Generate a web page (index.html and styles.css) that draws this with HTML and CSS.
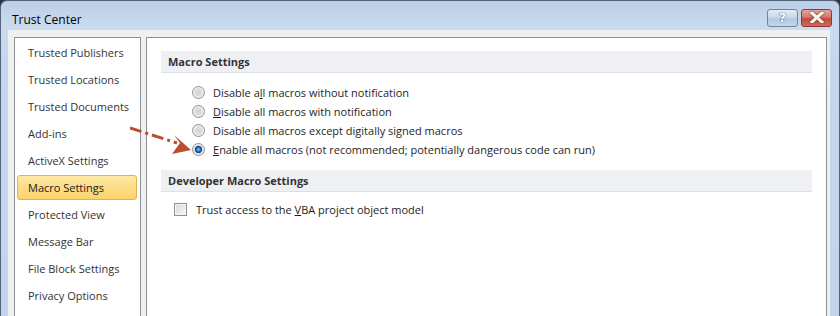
FILE: index.html
```html
<!DOCTYPE html>
<html>
<head>
<meta charset="utf-8">
<link rel="stylesheet" href="styles.css">
</head>
<body>
<div class="window">
  <div class="titlebar">
    <span class="title">Trust Center</span>
    <div class="caption-buttons">
      <span class="cbtn help">?</span>
      <span class="cbtn close"><svg width="14" height="11" viewBox="0 0 14 11"><path d="M2 1 L12 10 M12 1 L2 10" stroke="#fff" stroke-width="3" stroke-linecap="square"/><path d="M2 1 L12 10 M12 1 L2 10" stroke="#f4f4f4" stroke-width="1.6"/></svg></span>
    </div>
  </div>
  <div class="client">
    <ul class="nav">
      <li>Trusted Publishers</li>
      <li>Trusted Locations</li>
      <li>Trusted Documents</li>
      <li>Add-ins</li>
      <li>ActiveX Settings</li>
      <li class="selected">Macro Settings</li>
      <li>Protected View</li>
      <li>Message Bar</li>
      <li>File Block Settings</li>
      <li>Privacy Options</li>
    </ul>
    <div class="content">
      <div class="section-head">Macro Settings</div>
      <div class="options">
        <div class="opt"><span class="radio"></span><span>Disable a<u>l</u>l macros without notification</span></div>
        <div class="opt"><span class="radio"></span><span><u>D</u>isable all macros with notification</span></div>
        <div class="opt"><span class="radio"></span><span>Disable all macros except di<u>g</u>itally signed macros</span></div>
        <div class="opt"><span class="radio checked"></span><span><u>E</u>nable all macros (not recommended; potentially dangerous code can run)</span></div>
      </div>
      <div class="section-head">Developer Macro Settings</div>
      <div class="checks">
        <div class="opt"><span class="checkbox"></span><span>Trust access to the <u>V</u>BA project object model</span></div>
      </div>
    </div>
  </div>
  <svg class="arrow" width="70" height="40" viewBox="0 0 70 40">
    <path d="M0 2 L47 17" stroke="#b8502e" stroke-width="3" stroke-dasharray="12 4 3 4" fill="none"/>
    <path d="M61 24 L44 9 L50 17 L42 28 Z" fill="#b8502e"/>
  </svg>
</div>
</body>
</html>
```

FILE: styles.css
```css
html, body {
  margin: 0;
  padding: 0;
  background: #2a3340;
}
body {
  width: 840px;
  height: 316px;
  overflow: hidden;
  font-family: "Open Sans", "Noto Sans", sans-serif;
  font-size: 11px;
  color: #1e1e1e;
}
.window {
  position: relative;
  box-sizing: border-box;
  width: 840px;
  height: 316px;
  border: 1px solid #54657a;
  border-bottom: none;
  border-radius: 7px 7px 0 0;
  background: linear-gradient(#bccfe7 0, #cbdcf0 28px, #c4d7ee 60px, #c2d5ec 100%);
  padding: 0 9px 0 7px;
  display: flex;
  flex-direction: column;
}
.titlebar {
  height: 29px;
  display: flex;
  align-items: center;
  justify-content: space-between;
}
.title {
  margin-left: 4px;
  margin-top: 7px;
  font-size: 12px;
  color: #000;
}
.caption-buttons {
  display: flex;
  gap: 3px;
  margin-top: 4px;
  margin-right: -2px;
}
.cbtn {
  box-sizing: border-box;
  height: 18px;
  border-radius: 3px;
  display: flex;
  align-items: center;
  justify-content: center;
}
.help {
  width: 31px;
  border: 1px solid #7183a0;
  background: linear-gradient(#e1ebf6 0, #c9d9ec 45%, #b3c7e0 55%, #c5d7ec 100%);
  color: #fff;
  font-weight: bold;
  font-size: 13px;
  font-family: "DejaVu Sans", sans-serif;
  text-shadow: 0 0 1px #3d4f6a, 0 0 1px #3d4f6a;
}
.close {
  width: 31px;
  border: 1px solid #8a3a33;
  background: linear-gradient(#e3a89e 0, #d3776a 45%, #c24a3a 55%, #d26a56 100%);
}
.close svg { filter: drop-shadow(0 0 1px #6a2a22); }
.client {
  flex: 1;
  background: #f0f0f0;
  display: flex;
  gap: 5px;
  padding: 7px 3px 0 6px;
  min-height: 0;
}
.nav {
  list-style: none;
  margin: 0;
  padding: 2px 0 0 0;
  width: 125px;
  border: 1px solid #8c8f94;
  border-bottom: none;
  background: #fff;
  color: #333;
}
.nav li {
  box-sizing: border-box;
  height: 25px;
  margin: 0 3px 2px 2px;
  padding-left: 10px;
  display: flex;
  align-items: center;
  border: 1px solid transparent;
  border-radius: 3px;
}
.nav li.selected {
  border-color: #e5b24a;
  background: linear-gradient(#fde9a6 0, #fcdc84 50%, #fbd36e 100%);
  color: #222;
}
.content {
  flex: 1;
  border: 1px solid #8c8f94;
  border-bottom: none;
  background: #fff;
  padding: 13px 14px 0 14px;
}
.section-head {
  height: 21px;
  line-height: 21px;
  padding-left: 7px;
  background: #eef0f3;
  border-bottom: 1px solid #dde1e6;
  font-weight: bold;
  color: #333;
}
.options {
  padding: 10px 0 11px 31px;
  display: flex;
  flex-direction: column;
}
.opt {
  height: 19px;
  display: flex;
  align-items: center;
}
.radio {
  box-sizing: border-box;
  width: 13px;
  height: 13px;
  border-radius: 50%;
  border: 1px solid #8f9092;
  background: radial-gradient(circle at 50% 50%, #d4d4d4 0, #dcdcdc 3px, #e8e8e8 4.5px, #f8f8f8 6px);
  margin-right: 8px;
}
.radio.checked {
  background: radial-gradient(circle at 50% 50%, #8ad6ff 0, #2a86de 1.5px, #0f4f9c 3px, #1a3f70 3.4px, #d6d6d6 3.8px, #e8e8e8 4.8px, #f8f8f8 6px);
}
.checks {
  padding: 8px 0 0 13px;
}
.checkbox {
  box-sizing: border-box;
  width: 13px;
  height: 13px;
  border: 1px solid #8f8f8f;
  background: linear-gradient(135deg, #d8d8d8 0, #eaeaea 60%, #f8f8f8 100%);
  box-shadow: inset 0 0 0 1px #f4f4f4;
  margin-right: 9px;
}
.arrow {
  position: absolute;
  left: 129px;
  top: 125px;
}
```
